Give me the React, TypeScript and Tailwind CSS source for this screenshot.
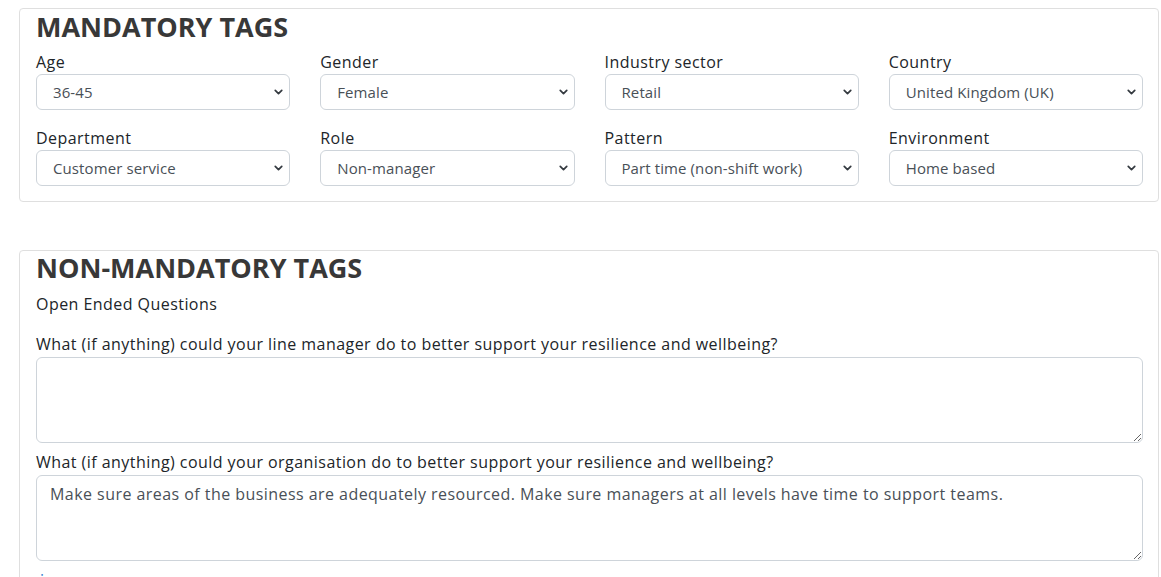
import { ChevronDown } from 'lucide-react';

const font = { fontFamily: '"Open Sans", "Noto Sans", sans-serif' };

interface TagField {
  label: string;
  value: string;
}

const mandatory: TagField[] = [
  { label: 'Age', value: '36-45' },
  { label: 'Gender', value: 'Female' },
  { label: 'Industry sector', value: 'Retail' },
  { label: 'Country', value: 'United Kingdom (UK)' },
  { label: 'Department', value: 'Customer service' },
  { label: 'Role', value: 'Non-manager' },
  { label: 'Pattern', value: 'Part time (non-shift work)' },
  { label: 'Environment', value: 'Home based' },
];

function TagSelect({ label, value }: TagField) {
  return (
    <div className="flex flex-col">
      <label className="text-[16px] leading-[19px] tracking-[0.45px] text-[#212529] mb-[2px]">{label}</label>
      <div className="relative">
        <select
          defaultValue={value}
          className="w-full h-[36px] appearance-none rounded-[6px] border border-[#ced4da] bg-white pl-[16px] pr-8 text-[15px] tracking-[0.1px] text-[#495057] outline-none"
          style={font}
        >
          <option>{value}</option>
        </select>
        <ChevronDown
          size={13}
          strokeWidth={3.2}
          className="pointer-events-none absolute right-[5px] top-1/2 -translate-y-1/2 text-[#343a40]"
        />
      </div>
    </div>
  );
}

function Question({ label, answer }: { label: string; answer?: string }) {
  return (
    <div className="flex flex-col">
      <label className="text-[16px] leading-[20px] tracking-[0.45px] text-[#212529] mb-[3px]">{label}</label>
      <textarea
        defaultValue={answer}
        className="w-full h-[86px] rounded-[6px] border border-[#ced4da] bg-white px-[13px] py-[6px] text-[16px] tracking-[0.45px] text-[#495057] outline-none"
        style={font}
      />
    </div>
  );
}

export default function App() {
  return (
    <div className="bg-white min-h-screen pl-[19px] pr-[2px] pt-[8px]" style={font}>
      {/* Mandatory tags */}
      <section className="rounded-[4px] border border-[#dfdfdf] pl-[16px] pr-[15px] pt-[2px] pb-[15px]">
        <h2 className="text-[27px] leading-[32px] font-bold text-[#383838] mb-[10px]">MANDATORY TAGS</h2>
        <div className="grid grid-cols-4 gap-x-[30px] gap-y-[19px]">
          {mandatory.map((f) => (
            <TagSelect key={f.label} {...f} />
          ))}
        </div>
      </section>

      {/* Non-mandatory tags */}
      <section className="mt-[48px] rounded-[4px] border border-[#dfdfdf] pl-[16px] pr-[15px] pt-[1px] pb-[16px]">
        <h2 className="text-[27px] leading-[32px] font-bold text-[#383838]">NON-MANDATORY TAGS</h2>
        <p className="mt-[10px] text-[16px] leading-[20px] tracking-[0.45px] text-[#212529]">Open Ended Questions</p>
        <div className="mt-[20px] flex flex-col gap-[9px]">
          <Question label="What (if anything) could your line manager do to better support your resilience and wellbeing?" />
          <Question
            label="What (if anything) could your organisation do to better support your resilience and wellbeing?"
            answer="Make sure areas of the business are adequately resourced. Make sure managers at all levels have time to support teams."
          />
          <p className="text-[16px] leading-[20px] text-[#1a73c8] pl-[4px]">i</p>
        </div>
      </section>
    </div>
  );
}
